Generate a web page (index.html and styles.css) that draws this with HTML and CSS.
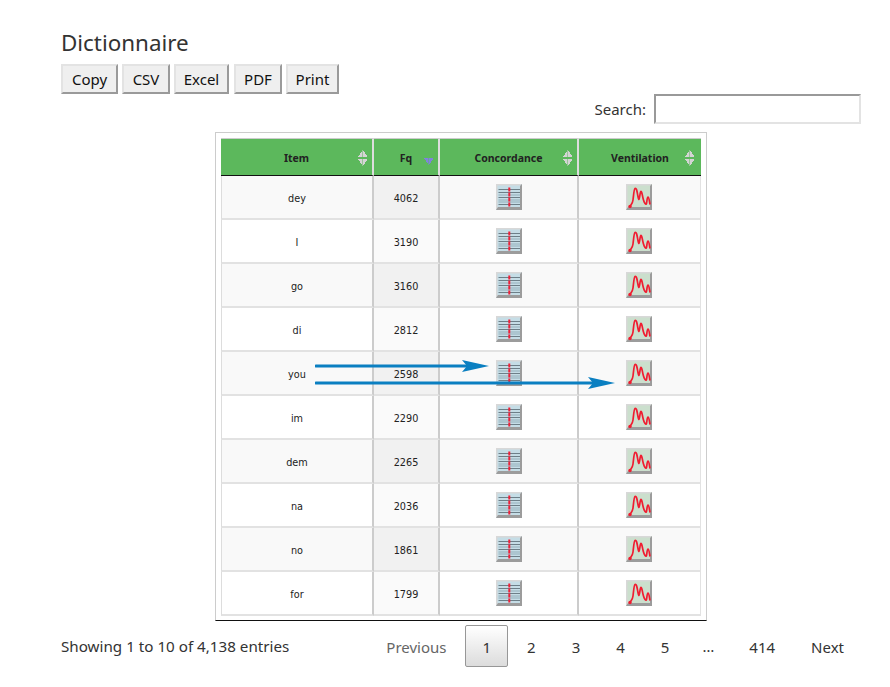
FILE: index.html
```html
<!DOCTYPE html>
<html lang="fr">
<head>
<meta charset="utf-8">
<title>Dictionnaire</title>
<link rel="stylesheet" href="styles.css">
</head>
<body>
<svg class="defs" width="0" height="0" aria-hidden="true">
  <symbol id="ic-conc" viewBox="0 0 26 26">
    <rect width="26" height="26" fill="#c5dde6"/>
    <path d="M0 0H26L24.500 1.500H1.500V24L0 26Z" fill="#d8d8d8"/>
    <path d="M26 0V26H0L2 23H24V2Z" fill="#9c9c9c"/>
    <path d="M2.500 5.500H24M2.500 8.500H24M2.500 13.500H24M2.500 20.500H24" stroke="#6d7f88" stroke-width="1.200"/>
    <path d="M2.500 11H24M2.500 16H24M2.500 18H24" stroke="#93aeb9" stroke-width="1"/>
    <path d="M13.300 3.500V22.500" stroke="#ee2038" stroke-width="2" stroke-dasharray="4 1"/>
  </symbol>
  <symbol id="ic-vent" viewBox="0 0 26 26">
    <rect width="26" height="26" fill="#cbdfcd"/>
    <path d="M0 0H26L24.500 1.500H1.500V24L0 26Z" fill="#d8d8d8"/>
    <path d="M26 0V26H0L2 23H24V2Z" fill="#9c9c9c"/>
    <path d="M4 22.500C5 20 6.500 20 7 16C7.600 11 8 5 9 4.500C10.500 3.800 11 7 11.700 11C12.200 14 12.700 15.500 13 15.500C13.600 15.500 14 8 14.800 7.500C16 7 16.500 13 17.500 16C18.300 18.800 19.500 20.500 20.300 20C21 19.500 20.800 13 22 13C23 13 23.300 17 24 20.500" fill="none" stroke="#f01c30" stroke-width="1.700"/>
    <circle cx="4" cy="22.500" r="1.700" fill="#f01c30"/>
  </symbol>
</svg>
<main class="wrapper">
  <h1 class="title">Dictionnaire</h1>
  <div class="buttons">
    <button class="btn btn-copy" type="button">Copy</button>
    <button class="btn btn-csv" type="button">CSV</button>
    <button class="btn btn-excel" type="button">Excel</button>
    <button class="btn btn-pdf" type="button">PDF</button>
    <button class="btn btn-print" type="button">Print</button>
  </div>
  <div class="filter"><label class="filter-label" for="q">Search:</label><input class="filter-input" id="q" type="search"></div>
  <div class="table-box">
    <table class="dict">
      <colgroup><col class="c1"><col class="c2"><col class="c3"><col class="c4"></colgroup>
      <thead>
        <tr>
          <th><span>Item</span><i class="sort"></i></th>
          <th><span>Fq</span><i class="sort-desc"></i></th>
          <th><span>Concordance</span><i class="sort"></i></th>
          <th><span>Ventilation</span><i class="sort"></i></th>
        </tr>
      </thead>
      <tbody>
        <tr><td>dey</td><td class="fq">4062</td><td><svg class="ic"><use href="#ic-conc"/></svg></td><td><svg class="ic"><use href="#ic-vent"/></svg></td></tr>
        <tr><td>I</td><td class="fq">3190</td><td><svg class="ic"><use href="#ic-conc"/></svg></td><td><svg class="ic"><use href="#ic-vent"/></svg></td></tr>
        <tr><td>go</td><td class="fq">3160</td><td><svg class="ic"><use href="#ic-conc"/></svg></td><td><svg class="ic"><use href="#ic-vent"/></svg></td></tr>
        <tr><td>di</td><td class="fq">2812</td><td><svg class="ic"><use href="#ic-conc"/></svg></td><td><svg class="ic"><use href="#ic-vent"/></svg></td></tr>
        <tr><td>you</td><td class="fq">2598</td><td><svg class="ic"><use href="#ic-conc"/></svg></td><td><svg class="ic"><use href="#ic-vent"/></svg></td></tr>
        <tr><td>im</td><td class="fq">2290</td><td><svg class="ic"><use href="#ic-conc"/></svg></td><td><svg class="ic"><use href="#ic-vent"/></svg></td></tr>
        <tr><td>dem</td><td class="fq">2265</td><td><svg class="ic"><use href="#ic-conc"/></svg></td><td><svg class="ic"><use href="#ic-vent"/></svg></td></tr>
        <tr><td>na</td><td class="fq">2036</td><td><svg class="ic"><use href="#ic-conc"/></svg></td><td><svg class="ic"><use href="#ic-vent"/></svg></td></tr>
        <tr><td>no</td><td class="fq">1861</td><td><svg class="ic"><use href="#ic-conc"/></svg></td><td><svg class="ic"><use href="#ic-vent"/></svg></td></tr>
        <tr><td>for</td><td class="fq">1799</td><td><svg class="ic"><use href="#ic-conc"/></svg></td><td><svg class="ic"><use href="#ic-vent"/></svg></td></tr>
      </tbody>
    </table>
    <svg class="arrows" width="310" height="30" viewBox="0 0 310 30" aria-hidden="true">
      <path d="M1 6H160" stroke="#0a7fc1" stroke-width="3" stroke-linecap="round"/>
      <path d="M147 0L174 6L147 12L152 6Z" fill="#0a7fc1"/>
      <path d="M1 23H285" stroke="#0a7fc1" stroke-width="3" stroke-linecap="round"/>
      <path d="M273 17L300 23L273 29L278 23Z" fill="#0a7fc1"/>
    </svg>
  </div>
  <div class="footer">
    <div class="info">Showing 1 to 10 of 4,138 entries</div>
    <nav class="pager">
      <a class="pg pg-off">Previous</a>
      <a class="pg pg-cur">1</a>
      <a class="pg">2</a>
      <a class="pg">3</a>
      <a class="pg">4</a>
      <a class="pg">5</a>
      <span class="pg-dots">…</span>
      <a class="pg">414</a>
      <a class="pg">Next</a>
    </nav>
  </div>
</main>
</body>
</html>
```
FILE: styles.css
```css
* { box-sizing: border-box; }
html, body { margin: 0; padding: 0; background: #fff; }
body { font-family: "Noto Sans", "Open Sans", sans-serif; color: #333; }
.defs { position: absolute; }
.wrapper { width: 800px; margin-left: 61px; padding-top: 27px; }
.title { margin: 0; height: 37px; font-size: 22.4px; line-height: 32px; font-weight: 400; color: #333; }
.buttons { display: flex; gap: 4px; height: 30px; }
.btn { height: 30px; padding: 0; font: 15px/1 "Noto Sans", sans-serif; color: #111; background: #efefef; border: 2px solid; border-color: #e3e3e3 #9a9a9a #9a9a9a #e3e3e3; }
.btn-copy { width: 57px; }
.btn-csv { width: 48px; }
.btn-excel { width: 55px; }
.btn-pdf { width: 48px; margin-left: 1px; }
.btn-print { width: 53px; }
.filter { display: flex; justify-content: flex-end; align-items: center; gap: 8px; height: 30px; }
.filter-label { font-size: 15px; color: #333; }
.filter-input { width: 207px; height: 30px; background: #fff; border: 2px solid; border-color: #999 #e3e3e3 #e3e3e3 #999; }
.table-box { position: relative; width: 492px; height: 489px; margin: 8px 0 0 154px; padding: 5px; border: 1px solid #ccc; border-bottom: 1px solid #111; }
.dict { width: 480px; table-layout: fixed; border-collapse: separate; border-spacing: 0; font-family: "DejaVu Sans", sans-serif; font-size: 9.7px; }
.c1 { width: 153px; } .c2 { width: 66px; } .c3 { width: 139px; } .c4 { width: 122px; }
.dict th { position: relative; height: 38px; padding: 2px 0 0; background: #5cb85c; font-family: "Noto Sans", sans-serif; font-size: 10.5px; font-weight: 700; color: #222; border-top: 1px solid #ccc; border-right: 2px solid #ddd; border-bottom: 1px solid #111; }
.dict th:last-child { border-right: 0; }
.dict td { height: 44px; padding: 2px 0 0; text-align: center; color: #222; border-right: 2px solid #ccc; border-bottom: 2px solid #e2e2e2; background: #fff; }
.dict td:first-child { border-left: 1px solid #ddd; }
.dict td:last-child { padding-right: 1px; border-right: 1px solid #e2e2e2; }
.dict tbody tr:nth-child(odd) td { background: #f9f9f9; }
.dict td.fq { background: #fafafa; }
.dict tbody tr:nth-child(odd) td.fq { background: #f1f1f1; }
.ic { display: block; width: 26px; height: 26px; margin: 0 auto; transform: translateY(-1px); }
.sort { position: absolute; right: 5px; top: 11px; width: 9px; height: 16px; background:
  linear-gradient(to bottom right, transparent 50%, #d4d4d4 50%) left top/4.500px 7px no-repeat,
  linear-gradient(to bottom left, transparent 50%, #d4d4d4 50%) right top/4.500px 7px no-repeat,
  linear-gradient(to top right, transparent 50%, #d4d4d4 50%) left bottom/4.500px 7px no-repeat,
  linear-gradient(to top left, transparent 50%, #d4d4d4 50%) right bottom/4.500px 7px no-repeat; }
.dict th:last-child .sort { right: 7px; }
.sort-desc { position: absolute; right: 5px; top: 19px; width: 9px; height: 7px; background:
  linear-gradient(to top right, transparent 50%, #7f83dc 50%) left top/4.500px 7px no-repeat,
  linear-gradient(to top left, transparent 50%, #7f83dc 50%) right top/4.500px 7px no-repeat; }
.arrows { position: absolute; left: 99px; top: 227px; }
.footer { display: flex; justify-content: space-between; align-items: center; height: 42px; margin-top: 4px; }
.info { font-size: 15.2px; color: #333; margin-top: -1px; }
.pager { display: flex; align-items: center; gap: 2px; font-size: 15px; color: #333; }
.pg { min-width: 42px; height: 42px; padding: 0 16px; line-height: 42px; text-align: center; border: 1px solid transparent; border-radius: 2px; }
.pg-off { color: #666; }
.pg-cur { background: linear-gradient(to bottom, #fff, #dcdcdc); border-color: #979797; }
.pg-dots { padding: 0 16px 0 14px; }
```
